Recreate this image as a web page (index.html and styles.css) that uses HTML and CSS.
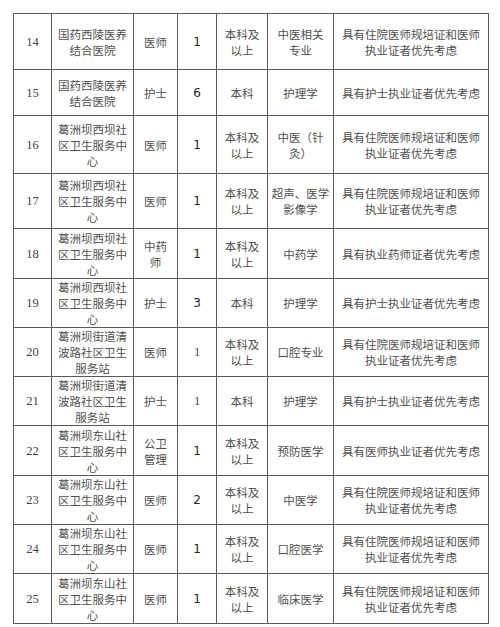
FILE: index.html
```html
<!DOCTYPE html>
<html lang="zh-CN">
<head>
<meta charset="utf-8">
<title>招聘岗位表</title>
<link rel="stylesheet" href="styles.css">
</head>
<body>
<table class="jobs">
  <colgroup>
    <col class="c-no"><col class="c-unit"><col class="c-post"><col class="c-num"><col class="c-edu"><col class="c-major"><col class="c-note">
  </colgroup>
  <tbody>
    <tr class="h56">
      <td class="no">14</td><td>国药西陵医养<br>结合医院</td><td>医师</td><td class="num">1</td><td>本科及<br>以上</td><td>中医相关<br>专业</td><td>具有住院医师规培证和医师<br>执业证者优先考虑</td>
    </tr>
    <tr class="h46">
      <td class="no">15</td><td>国药西陵医养<br>结合医院</td><td>护士</td><td class="num">6</td><td>本科</td><td>护理学</td><td>具有护士执业证者优先考虑</td>
    </tr>
    <tr class="h58">
      <td class="no">16</td><td>葛洲坝西坝社<br>区卫生服务中<br>心</td><td>医师</td><td class="num">1</td><td>本科及<br>以上</td><td>中医（针<br>灸）</td><td>具有住院医师规培证和医师<br>执业证者优先考虑</td>
    </tr>
    <tr class="h55">
      <td class="no">17</td><td>葛洲坝西坝社<br>区卫生服务中<br>心</td><td>医师</td><td class="num">1</td><td>本科及<br>以上</td><td>超声、医学<br>影像学</td><td>具有住院医师规培证和医师<br>执业证者优先考虑</td>
    </tr>
    <tr class="h50">
      <td class="no">18</td><td>葛洲坝西坝社<br>区卫生服务中<br>心</td><td>中药<br>师</td><td class="num">1</td><td>本科及<br>以上</td><td>中药学</td><td>具有执业药师证者优先考虑</td>
    </tr>
    <tr class="h49">
      <td class="no">19</td><td>葛洲坝西坝社<br>区卫生服务中<br>心</td><td>护士</td><td class="num">3</td><td>本科</td><td>护理学</td><td>具有护士执业证者优先考虑</td>
    </tr>
    <tr class="h49">
      <td class="no">20</td><td>葛洲坝街道清<br>波路社区卫生<br>服务站</td><td>医师</td><td class="no">1</td><td>本科及<br>以上</td><td>口腔专业</td><td>具有住院医师规培证和医师<br>执业证者优先考虑</td>
    </tr>
    <tr class="h49">
      <td class="no">21</td><td>葛洲坝街道清<br>波路社区卫生<br>服务站</td><td>护士</td><td class="no">1</td><td>本科</td><td>护理学</td><td>具有护士执业证者优先考虑</td>
    </tr>
    <tr class="h50">
      <td class="no">22</td><td>葛洲坝东山社<br>区卫生服务中<br>心</td><td>公卫<br>管理</td><td class="num">1</td><td>本科及<br>以上</td><td>预防医学</td><td>具有医师执业证者优先考虑</td>
    </tr>
    <tr class="h49">
      <td class="no">23</td><td>葛洲坝东山社<br>区卫生服务中<br>心</td><td>医师</td><td class="num">2</td><td>本科及<br>以上</td><td>中医学</td><td>具有住院医师规培证和医师<br>执业证者优先考虑</td>
    </tr>
    <tr class="h49">
      <td class="no">24</td><td>葛洲坝东山社<br>区卫生服务中<br>心</td><td>医师</td><td class="num">1</td><td>本科及<br>以上</td><td>口腔医学</td><td>具有住院医师规培证和医师<br>执业证者优先考虑</td>
    </tr>
    <tr class="h50">
      <td class="no">25</td><td>葛洲坝东山社<br>区卫生服务中<br>心</td><td>医师</td><td class="num">1</td><td>本科及<br>以上</td><td>临床医学</td><td>具有住院医师规培证和医师<br>执业证者优先考虑</td>
    </tr>
  </tbody>
</table>
</body>
</html>
```

FILE: styles.css
```css
html, body {
  margin: 0;
  padding: 0;
  background: #ffffff;
}

body {
  padding: 13px 0 0 13px;
  font-family: "Noto Sans CJK SC", "Noto Sans", sans-serif;
}

.jobs {
  border-collapse: collapse;
  table-layout: fixed;
  width: 476px;
  border: 1px solid #5a5a5a;
}

.c-no { width: 38px; }
.c-unit { width: 82px; }
.c-post { width: 44px; }
.c-num { width: 39px; }
.c-edu { width: 51px; }
.c-major { width: 66px; }
.c-note { width: 155px; }

.jobs td {
  border: 1px solid #5a5a5a;
  padding: 0;
  text-align: center;
  vertical-align: middle;
  white-space: nowrap;
  font-size: 11.5px;
  line-height: 16px;
  color: #505050;
  font-weight: 400;
}

.jobs td.no {
  font-family: "Liberation Serif", serif;
  font-size: 12.5px;
  color: #444444;
}

.jobs td.num {
  font-family: "DejaVu Sans", sans-serif;
  font-size: 12px;
  color: #222222;
}

.h46 td { height: 45px; }
.h49 td { height: 48px; }
.h50 td { height: 49px; }
.h55 td { height: 54px; }
.h56 td { height: 55px; }
.h58 td { height: 57px; }
```
